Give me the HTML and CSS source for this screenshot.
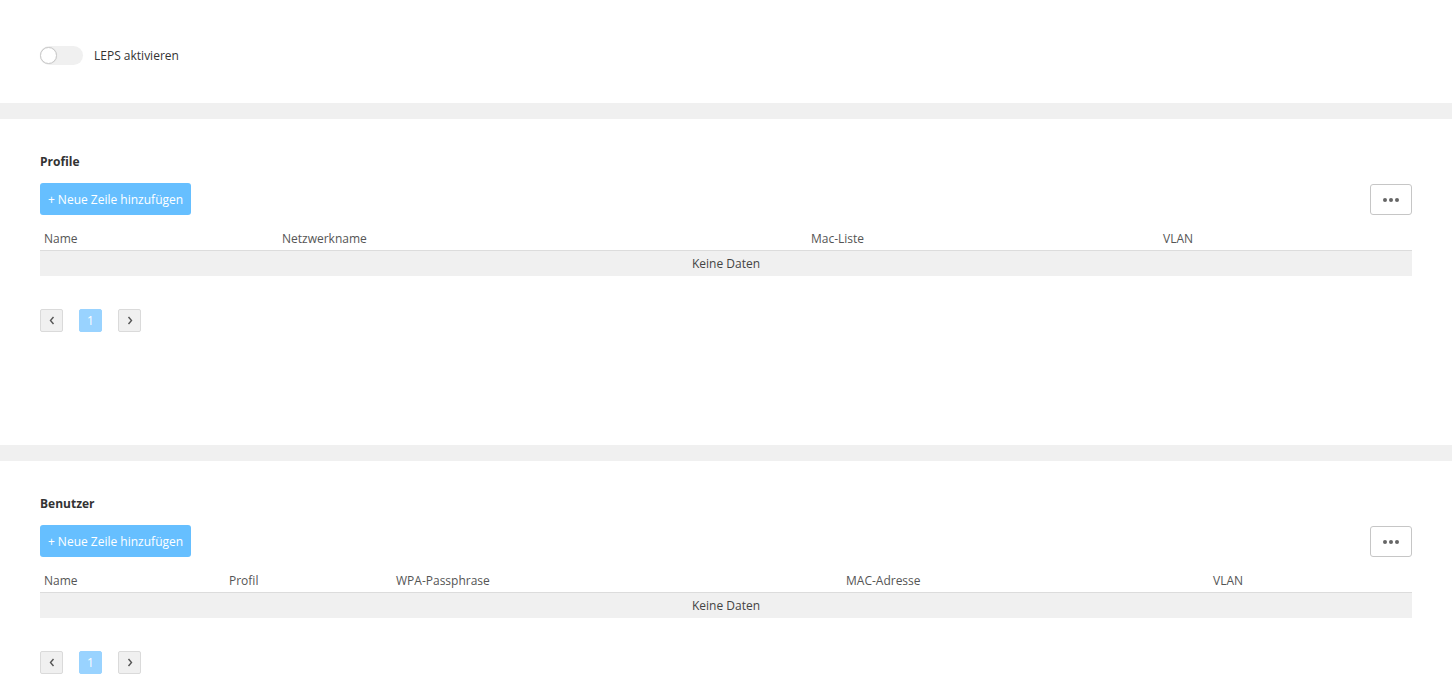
FILE: index.html
```html
<!DOCTYPE html>
<html lang="de">
<head>
<meta charset="utf-8">
<title>LEPS</title>
<link rel="stylesheet" href="styles.css">
</head>
<body>
<section class="panel panel-top">
  <label class="switch-row">
    <span class="switch"><span class="knob"></span></span>
    <span class="switch-label">LEPS aktivieren</span>
  </label>
</section>
<div class="band"></div>
<section class="panel panel-table">
  <h3 class="title">Profile</h3>
  <div class="toolbar">
    <button class="btn-add">+ Neue Zeile hinzufügen</button>
    <button class="btn-more"><span></span><span></span><span></span></button>
  </div>
  <table class="grid">
    <colgroup><col style="width:238px"><col style="width:529px"><col style="width:352px"><col></colgroup>
    <thead><tr><th>Name</th><th>Netzwerkname</th><th>Mac-Liste</th><th>VLAN</th></tr></thead>
    <tbody><tr><td colspan="4" class="empty">Keine Daten</td></tr></tbody>
  </table>
  <div class="pager">
    <button class="pg nav"><svg width="6" height="9" viewBox="0 0 6 9"><polyline points="4.5,1 1.5,4.5 4.5,8" fill="none" stroke="#555" stroke-width="1.4"/></svg></button>
    <button class="pg active">1</button>
    <button class="pg nav"><svg width="6" height="9" viewBox="0 0 6 9"><polyline points="1.5,1 4.5,4.5 1.5,8" fill="none" stroke="#555" stroke-width="1.4"/></svg></button>
  </div>
</section>
<div class="band"></div>
<section class="panel panel-table">
  <h3 class="title">Benutzer</h3>
  <div class="toolbar">
    <button class="btn-add">+ Neue Zeile hinzufügen</button>
    <button class="btn-more"><span></span><span></span><span></span></button>
  </div>
  <table class="grid">
    <colgroup><col style="width:185px"><col style="width:167px"><col style="width:450px"><col style="width:367px"><col></colgroup>
    <thead><tr><th>Name</th><th>Profil</th><th>WPA-Passphrase</th><th>MAC-Adresse</th><th>VLAN</th></tr></thead>
    <tbody><tr><td colspan="5" class="empty">Keine Daten</td></tr></tbody>
  </table>
  <div class="pager">
    <button class="pg nav"><svg width="6" height="9" viewBox="0 0 6 9"><polyline points="4.5,1 1.5,4.5 4.5,8" fill="none" stroke="#555" stroke-width="1.4"/></svg></button>
    <button class="pg active">1</button>
    <button class="pg nav"><svg width="6" height="9" viewBox="0 0 6 9"><polyline points="1.5,1 4.5,4.5 1.5,8" fill="none" stroke="#555" stroke-width="1.4"/></svg></button>
  </div>
</section>
</body>
</html>
```
FILE: styles.css
```css
html, body {
  margin: 0;
  padding: 0;
  background: #fff;
}
body {
  font-family: "Open Sans", "Liberation Sans", sans-serif;
  font-size: 12px;
  color: #333;
}
.panel {
  padding: 0 40px;
}
.panel-top {
  padding-top: 45px;
  padding-bottom: 38px;
}
.band {
  height: 16px;
  background: #f0f0f0;
}
.switch-row {
  display: flex;
  align-items: center;
  gap: 11px;
  height: 20px;
}
.switch {
  width: 43px;
  height: 19px;
  border-radius: 10px;
  background: #f0f0f0;
  display: flex;
  align-items: center;
}
.knob {
  width: 17px;
  height: 17px;
  border-radius: 50%;
  background: #fff;
  border: 1px solid #c8c8c8;
  box-sizing: border-box;
  box-shadow: 0 0 1px rgba(0,0,0,0.1);
}
.switch-label {
  color: #333;
  line-height: 17px;
}
.panel-table {
  padding-top: 34px;
  padding-bottom: 113px;
}
.panel-table:last-of-type {
  padding-bottom: 20px;
}
.title {
  margin: 0;
  font-size: 12px;
  font-weight: 700;
  line-height: 17px;
  color: #333;
}
.toolbar {
  margin-top: 13px;
  display: flex;
  justify-content: space-between;
  align-items: center;
  height: 32px;
}
.btn-add {
  font-family: inherit;
  font-size: 12px;
  color: #fff;
  background: #66bfff;
  border: none;
  border-radius: 3px;
  height: 32px;
  width: 151px;
  padding: 0;
  cursor: pointer;
}
.btn-more {
  width: 42px;
  height: 31px;
  border: 1px solid #c6c6c6;
  border-radius: 3px;
  background: #fff;
  display: flex;
  align-items: center;
  justify-content: center;
  gap: 2px;
  padding: 0;
  margin-top: 1px;
}
.btn-more span {
  width: 4px;
  height: 4px;
  border-radius: 50%;
  background: #666;
}
.grid {
  width: 100%;
  margin-top: 11px;
  border-collapse: collapse;
  table-layout: fixed;
}
.grid th {
  text-align: left;
  font-weight: 400;
  color: #555;
  height: 24px;
  padding: 0 4px;
  line-height: 17px;
  border-bottom: 1px solid #dcdcdc;
  vertical-align: middle;
}
.grid td.empty {
  background: #f0f0f0;
  height: 25px;
  text-align: center;
  color: #444;
  padding: 0;
}
.pager {
  margin-top: 33px;
  display: flex;
  gap: 16px;
}
.pg {
  width: 23px;
  height: 23px;
  border-radius: 2px;
  font-family: inherit;
  padding: 0;
  display: flex;
  align-items: center;
  justify-content: center;
}
.pg.nav {
  background: #f0f0f0;
  border: 1px solid #dadada;
}
.pg.active {
  background: #99d3ff;
  border: 1px solid #99d3ff;
  color: #fff;
  font-size: 12px;
}
```
